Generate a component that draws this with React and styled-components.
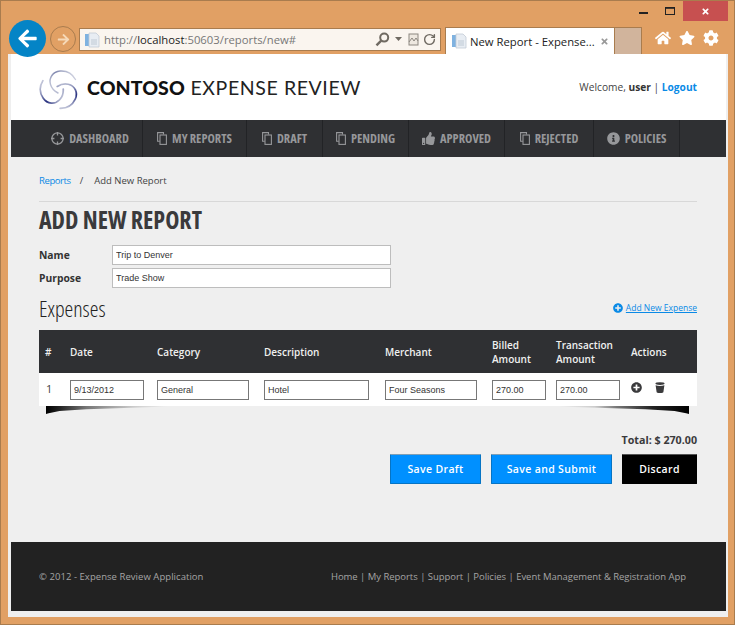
import React from "react"
import styled, { createGlobalStyle } from "styled-components"
import { FaArrowLeft, FaArrowRight, FaHome, FaStar, FaCog, FaThumbsUp, FaInfoCircle, FaPlusCircle, FaTimes } from "react-icons/fa"
import { RotateCw } from "lucide-react"

const GlobalStyle = createGlobalStyle`
	html, body {
		margin: 0;
		padding: 0;
		background: #e1a064;
	}
	* {
		box-sizing: border-box;
	}
`

const Window = styled.div`
	width: 735px;
	height: 625px;
	background: #e1a064;
	border: 1px solid #a97c4e;
	padding: 0 6px 7px 7px;
	display: flex;
	flex-direction: column;
	font-family: "Open Sans", sans-serif;
	overflow: hidden;
`

const TitleBar = styled.div`
	height: 26px;
	display: flex;
	justify-content: flex-end;
	align-items: flex-start;
`

const WinButton = styled.div`
	width: ${(p) => p.$w}px;
	height: 20px;
	margin-left: ${(p) => p.$gap || 0}px;
	display: flex;
	align-items: center;
	justify-content: center;
	color: #fff;
	background: ${(p) => p.$bg || "transparent"};
`

const ToolRow = styled.div`
	height: 27px;
	display: flex;
	align-items: flex-start;
	margin-left: 1px;
`

const BackButton = styled.div`
	width: 37px;
	height: 37px;
	margin-top: -7px;
	border-radius: 50%;
	background: #0484c6;
	color: #fff;
	display: flex;
	align-items: center;
	justify-content: center;
	font-size: 21px;
	position: relative;
	z-index: 2;
	flex: none;
`

const ForwardButton = styled.div`
	width: 26px;
	height: 26px;
	margin: -1px 3px 0 4px;
	border-radius: 50%;
	border: 1px solid #a97c4e;
	color: #f6d9b8;
	display: flex;
	align-items: center;
	justify-content: center;
	font-size: 13px;
	flex: none;
`

const AddressBar = styled.div`
	width: 362px;
	height: 23px;
	margin-top: 1px;
	background: #faf5ef;
	border: 1px solid #a97c4e;
	display: flex;
	align-items: center;
	padding: 0 4px 0 4px;
	flex: none;
`

const Url = styled.span`
	margin-left: 4px;
	font-size: 11.3px;
	color: #777;
	flex: 1;
	white-space: nowrap;
	b {
		font-weight: 400;
		color: #222;
	}
`

const DropCaret = styled.svg`
	margin: 0 5px;
`

const RefreshIcon = styled(RotateCw)`
	margin-left: 3px;
`

const Tab = styled.div`
	width: 170px;
	height: 27px;
	margin-left: 4px;
	background: #fff;
	border: 1px solid #a97c4e;
	border-bottom: none;
	display: flex;
	align-items: center;
	padding: 0 5px;
	flex: none;
`

const TabTitle = styled.span`
	margin-left: 3px;
	font-size: 11.3px;
	color: #222;
	flex: 1;
	white-space: nowrap;
`

const TabStub = styled.div`
	width: 27px;
	height: 27px;
	background: #d1b49c;
	border: 1px solid #a97c4e;
	border-left: none;
	border-bottom: none;
	flex: none;
`

const ToolIcons = styled.div`
	display: flex;
	align-items: center;
	gap: 8px;
	margin: 3px 0 0 13px;
	color: #fff;
	font-size: 16px;
`

const Content = styled.div`
	flex: 1;
	background: #efefef;
	padding: 0 2px 6px 3px;
	display: flex;
	flex-direction: column;
`

const Header = styled.header`
	height: 66px;
	background: #fff;
	padding: 0 29px 0 28px;
	display: flex;
	align-items: center;
	justify-content: space-between;
`

const Brand = styled.div`
	display: flex;
	align-items: center;
	gap: 7px;
	padding-top: 4px;
`

const BrandName = styled.div`
	font-family: "Lato", sans-serif;
	font-size: 19.5px;
	color: #222;
	white-space: nowrap;
	letter-spacing: 0.6px;
	margin-top: -4px;
	b {
		color: #111;
		font-weight: 900;
		letter-spacing: 0.1px;
	}
`

const Welcome = styled.div`
	font-size: 10.2px;
	color: #444;
	b {
		color: #333;
	}
	a {
		color: #0a8ae6;
		font-weight: 700;
	}
`

const Nav = styled.nav`
	height: 37px;
	background: #2f3033;
	padding-left: 27px;
	display: flex;
`

const NavItem = styled.div`
	width: ${(p) => p.$w}px;
	border-right: 1px solid #222326;
	display: flex;
	align-items: center;
	justify-content: center;
	gap: 5px;
	color: #96979a;
	font-size: 12.4px;
	font-weight: 700;
	font-stretch: 75%;
	white-space: nowrap;
	svg {
		flex: none;
	}
`

const Main = styled.main`
	flex: 1;
	padding: 0 29px 0 28px;
	display: flex;
	flex-direction: column;
`

const Breadcrumb = styled.div`
	height: 45px;
	padding-top: 17px;
	border-bottom: 1px solid #d8d8d8;
	font-size: 9.5px;
	color: #444;
	a {
		color: #0a8ae6;
		letter-spacing: -0.4px;
	}
	span {
		margin: 0 11px 0 9px;
	}
`

const PageTitle = styled.h1`
	margin: 0 0 6px;
	height: 35px;
	line-height: 35px;
	font-size: 24px;
	font-weight: 700;
	font-stretch: 75%;
	color: #3a3a3c;
`

const FieldRow = styled.div`
	display: flex;
	align-items: center;
	height: ${(p) => p.$h}px;
`

const FieldLabel = styled.label`
	width: 73px;
	font-size: 10.3px;
	font-weight: 700;
	color: #333;
`

const TextBox = styled.input`
	width: ${(p) => p.$w}px;
	height: ${(p) => p.$h || 20}px;
	border: 1px solid ${(p) => p.$edge || "#bdbdbd"};
	background: #fff;
	padding: 0 3px;
	font-family: "Liberation Sans", sans-serif;
	font-size: 9px;
	color: #333;
	outline: none;
	border-radius: 0;
`

const SectionHead = styled.div`
	height: 41px;
	display: flex;
	align-items: center;
	justify-content: space-between;
`

const SectionTitle = styled.h2`
	margin: -3px 0 0;
	font-size: 22px;
	font-weight: 300;
	font-stretch: 75%;
	color: #222;
`

const AddLink = styled.a`
	display: flex;
	align-items: center;
	gap: 3px;
	margin-top: -4px;
	font-size: 8.5px;
	color: #0a8ae6;
	text-decoration: underline;
	svg {
		font-size: 10px;
	}
`

const columns = "31px 87px 107px 121px 107px 64px 75px 66px"

const TableHead = styled.div`
	display: grid;
	grid-template-columns: ${columns};
	align-items: center;
	height: 43px;
	padding-top: 1px;
	background: #2f3033;
	color: #f0f0f0;
	font-size: 10px;
	font-weight: 600;
	line-height: 14.5px;
`

const HeadCell = styled.div`
	padding-left: ${(p) => (p.$first ? 6 : 0)}px;
`

const TableRow = styled.div`
	display: grid;
	grid-template-columns: ${columns};
	align-items: center;
	height: 33px;
	background: #fff;
	font-size: 11px;
	color: #444;
`

const RowNumber = styled.div`
	padding-left: 7px;
	margin-top: -3px;
`

const Actions = styled.div`
	display: flex;
	align-items: center;
	gap: 13px;
	margin-top: -4px;
	color: #3a3a3c;
	font-size: 11px;
`

const Shadows = styled.div`
	height: 8px;
	padding: 0 8px 0 7px;
	display: flex;
	justify-content: space-between;
`

const Shadow = styled.div`
	width: ${(p) => p.$w}px;
	height: 8px;
	background: linear-gradient(
		${(p) => (p.$right ? "to left" : "to right")},
		#000 0%,
		#222 ${(p) => (p.$right ? 25 : 10)}%,
		#777 ${(p) => (p.$right ? 50 : 30)}%,
		rgba(0, 0, 0, 0.15) 65%,
		rgba(0, 0, 0, 0) 90%
	);
	clip-path: ${(p) =>
		p.$right
			? "polygon(0 0, 100% 0, 100% 100%, 98% 90%, 90% 62%, 70% 40%, 20% 12%)"
			: "polygon(0 0, 100% 0, 80% 12%, 30% 40%, 10% 62%, 2% 90%, 0 100%)"};
`

const Total = styled.div`
	margin-top: 19px;
	text-align: right;
	font-size: 10.7px;
	font-weight: 700;
	color: #3a3a3c;
`

const ButtonRow = styled.div`
	margin-top: 7px;
	display: flex;
	justify-content: flex-end;
	gap: 10px;
`

const Button = styled.button`
	width: ${(p) => p.$w}px;
	height: 30px;
	padding: 0;
	font-family: "Open Sans", sans-serif;
	font-size: 10.5px;
	font-weight: 600;
	letter-spacing: 0.35px;
	color: #fff;
	background: ${(p) => (p.$dark ? "#000" : "#0090ff")};
	border: 1px solid ${(p) => (p.$dark ? "#000" : "#0674c4")};
	border-top-color: ${(p) => (p.$dark ? "#555" : "#7f9fb5")};
	border-radius: 1px;
`

const Footer = styled.footer`
	height: 69px;
	background: #222;
	padding: 0 40px 0 28px;
	display: flex;
	align-items: center;
	justify-content: space-between;
	font-size: 9.5px;
	color: #a5a5a5;
	white-space: nowrap;
`

const Copyright = styled.span`
	letter-spacing: 0.05px;
`

const FooterLinks = styled.span`
	letter-spacing: -0.03px;
`

const PageIcon = () => (
	<svg width="16" height="16" viewBox="0 0 16 16">
		<rect x="1" y="2" width="5" height="12" fill="#7fb2e0" />
		<path d="M5 1h7l3 3v11H5z" fill="#e8edf3" stroke="#c3ccd6" strokeWidth="0.8" />
		<path d="M7 8h6M7 10h6M7 12h6" stroke="#b4c0cc" strokeWidth="0.8" />
	</svg>
)

const SearchIcon = () => (
	<svg width="15" height="15" viewBox="0 0 15 15" fill="none" stroke="#6f6a62" strokeWidth="2">
		<circle cx="9.2" cy="5.6" r="4" />
		<path d="M6.2 8.6 1.5 13.3" strokeWidth="2.4" />
	</svg>
)

const CompatIcon = () => (
	<svg width="12" height="14" viewBox="0 0 12 14" fill="none" stroke="#8c8780">
		<rect x="1" y="1" width="9" height="11" fill="#eee8e0" />
		<path d="M1 9l3-4 2 3 2-3 2 3" />
	</svg>
)

const CrosshairIcon = () => (
	<svg width="13" height="13" viewBox="0 0 13 13" fill="none" stroke="#96979a" strokeWidth="1.3">
		<circle cx="6.5" cy="6.5" r="5.6" />
		<path d="M6.5 0v3.4M6.5 9.6V13M0 6.5h3.4M9.6 6.5H13" />
	</svg>
)

const CopyIcon = () => (
	<svg width="10" height="13" viewBox="0 0 10 13" fill="none" stroke="#96979a" strokeWidth="1.1">
		<path d="M6.5 2.5V.6H.6v8.6h2.2" />
		<rect x="3" y="3" width="6.4" height="9.4" />
	</svg>
)

// same blade three times round the middle, top one paler than the other two
const blades = [
	{ angle: 0, color: "#7d85ad", width: 1.4 },
	{ angle: 120, color: "#27307f", width: 1.7 },
	{ angle: 240, color: "#27307f", width: 1.7 }
]

const LogoMark = () => (
	<svg width="41" height="41" viewBox="0 0 41 41" fill="none" strokeLinecap="round">
		<defs>
			{blades.map((b) => (
				<linearGradient key={b.angle} id={`blade${b.angle}`} gradientUnits="userSpaceOnUse" x1="37" y1="8" x2="15" y2="24">
					<stop offset="0" stopColor="#d5d8e4" />
					<stop offset="0.5" stopColor={b.color} />
					<stop offset="1" stopColor="#c5c9da" />
				</linearGradient>
			))}
		</defs>
		{blades.map((b) => (
			<path
				key={b.angle}
				transform={`rotate(${b.angle} 20.5 20.5)`}
				d="M36.5 10.5C33 4 27 1.5 21 2 14 2.5 9.5 9 11.5 15.5 12.5 19 15 22 19 24"
				stroke={`url(#blade${b.angle})`}
				strokeWidth={b.width}
			/>
		))}
	</svg>
)

const TrashIcon = () => (
	<svg width="10" height="11" viewBox="0 0 10 11" fill="#3a3a3c">
		<ellipse cx="5" cy="1.6" rx="4.6" ry="1.4" />
		<path d="M.6 3.2c2.6 1 6.2 1 8.8 0L8.4 10c-.2.7-1 1-3.4 1s-3.2-.3-3.4-1z" />
	</svg>
)

const navItems = [
	{ label: "DASHBOARD", w: 105, icon: <CrosshairIcon /> },
	{ label: "MY REPORTS", w: 104, icon: <CopyIcon /> },
	{ label: "DRAFT", w: 76, icon: <CopyIcon /> },
	{ label: "PENDING", w: 86, icon: <CopyIcon /> },
	{ label: "APPROVED", w: 96, icon: <FaThumbsUp size={13} /> },
	{ label: "REJECTED", w: 89, icon: <CopyIcon /> },
	{ label: "POLICIES", w: 86, icon: <FaInfoCircle size={13} /> }
]

const App = () => {
	return (
		<Window>
			<GlobalStyle />
			<TitleBar>
				<WinButton $w={34}>
					<svg width="9" height="6"><rect width="9" height="2" y="4" fill="#222" /></svg>
				</WinButton>
				<WinButton $w={20}>
					<svg width="10" height="8" fill="none" stroke="#222"><rect x="0.5" y="1" width="9" height="6.5" strokeWidth="1" /><path d="M0 .8h10" strokeWidth="1.6" /></svg>
				</WinButton>
				<WinButton $w={45} $gap={3} $bg="#c75050">
					<FaTimes size={9} />
				</WinButton>
			</TitleBar>
			<ToolRow>
				<BackButton>
					<FaArrowLeft />
				</BackButton>
				<ForwardButton>
					<FaArrowRight />
				</ForwardButton>
				<AddressBar>
					<PageIcon />
					<Url>
						http://<b>localhost</b>:50603/reports/new#
					</Url>
					<SearchIcon />
					<DropCaret width="8" height="5"><path d="M0 0h7L3.5 4z" fill="#6f6a62" /></DropCaret>
					<CompatIcon />
					<RefreshIcon size={13} color="#6f6a62" strokeWidth={2.6} />
				</AddressBar>
				<Tab>
					<PageIcon />
					<TabTitle>New Report - Expense...</TabTitle>
					<FaTimes size={9} color="#999" />
				</Tab>
				<TabStub />
				<ToolIcons>
					<FaHome />
					<FaStar />
					<FaCog />
				</ToolIcons>
			</ToolRow>
			<Content>
				<Header>
					<Brand>
						<LogoMark />
						<BrandName>
							<b>CONTOSO</b> EXPENSE REVIEW
						</BrandName>
					</Brand>
					<Welcome>
						Welcome, <b>user</b> | <a>Logout</a>
					</Welcome>
				</Header>
				<Nav>
					{navItems.map((item) => (
						<NavItem key={item.label} $w={item.w}>
							{item.icon}
							{item.label}
						</NavItem>
					))}
				</Nav>
				<Main>
					<Breadcrumb>
						<a>Reports</a>
						<span>/</span>
						Add New Report
					</Breadcrumb>
					<PageTitle>ADD NEW REPORT</PageTitle>
					<FieldRow $h={23}>
						<FieldLabel>Name</FieldLabel>
						<TextBox $w={279} defaultValue="Trip to Denver" />
					</FieldRow>
					<FieldRow $h={23}>
						<FieldLabel>Purpose</FieldLabel>
						<TextBox $w={279} defaultValue="Trade Show" />
					</FieldRow>
					<SectionHead>
						<SectionTitle>Expenses</SectionTitle>
						<AddLink>
							<FaPlusCircle />
							Add New Expense
						</AddLink>
					</SectionHead>
					<TableHead>
						<HeadCell $first>#</HeadCell>
						<HeadCell>Date</HeadCell>
						<HeadCell>Category</HeadCell>
						<HeadCell>Description</HeadCell>
						<HeadCell>Merchant</HeadCell>
						<HeadCell>Billed Amount</HeadCell>
						<HeadCell>Transaction Amount</HeadCell>
						<HeadCell>Actions</HeadCell>
					</TableHead>
					<TableRow>
						<RowNumber>1</RowNumber>
						<TextBox $w={74} $edge="#777" defaultValue="9/13/2012" />
						<TextBox $w={92} $edge="#777" defaultValue="General" />
						<TextBox $w={105} $edge="#777" defaultValue="Hotel" />
						<TextBox $w={92} $edge="#777" defaultValue="Four Seasons" />
						<TextBox $w={54} $edge="#777" defaultValue="270.00" />
						<TextBox $w={64} $edge="#777" defaultValue="270.00" />
						<Actions>
							<FaPlusCircle />
							<TrashIcon />
						</Actions>
					</TableRow>
					<Shadows>
						<Shadow $w={135} />
						<Shadow $w={145} $right />
					</Shadows>
					<Total>Total: $ 270.00</Total>
					<ButtonRow>
						<Button $w={91}>Save Draft</Button>
						<Button $w={121}>Save and Submit</Button>
						<Button $w={75} $dark>Discard</Button>
					</ButtonRow>
				</Main>
				<Footer>
					<Copyright>© 2012 - Expense Review Application</Copyright>
					<FooterLinks>Home | My Reports | Support | Policies | Event Management &amp; Registration App</FooterLinks>
				</Footer>
			</Content>
		</Window>
	)
}

export default App
